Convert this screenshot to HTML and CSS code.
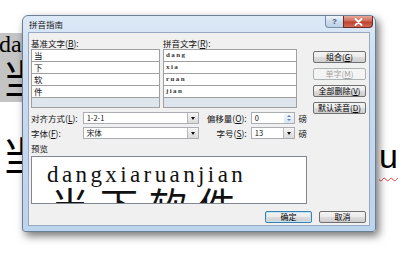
FILE: index.html
```html
<!DOCTYPE html>
<html>
<head>
  <title>拼音指南</title>
  <link rel="stylesheet" href="styles.css">
</head>
<body>
  <!-- document behind the dialog -->
  <div class="doc">
    <div class="sel">
      <div class="docPy">dang</div>
      <div class="docHan">当下软件</div>
    </div>
    <div class="docLine">
      <span class="docHan">当下软件</span>
      <span class="docLatin">u</span>
    </div>
  </div>

  <div class="window">
    <div class="titlebar">
      <span class="title">拼音指南</span>
      <div class="captionBtns">
        <span class="helpBtn">?</span>
        <span class="closeBtn">
          <svg width="9" height="8" viewBox="0 0 9 8"><path d="M1.5 1 L7.5 7 M7.5 1 L1.5 7" stroke="#fff" stroke-width="1.8" stroke-linecap="round"/></svg>
        </span>
      </div>
    </div>

    <div class="client">
      <div class="top">
        <div class="main">
          <div class="heads">
            <span class="headLeft">基准文字(<u>B</u>):</span>
            <span>拼音文字(<u>R</u>):</span>
          </div>
          <div class="table">
            <div class="col colBase">
              <div class="cell">当</div>
              <div class="cell">下</div>
              <div class="cell">软</div>
              <div class="cell">件</div>
              <div class="cell empty"></div>
            </div>
            <div class="col colPinyin">
              <div class="cell py">dang</div>
              <div class="cell py">xia</div>
              <div class="cell py">ruan</div>
              <div class="cell py">jian</div>
              <div class="cell empty"></div>
            </div>
          </div>

          <div class="optRow">
            <span class="optLabel">对齐方式(<u>L</u>):</span>
            <div class="combo wide"><span class="comboText">1-2-1</span><span class="dropBtn"></span></div>
            <span class="optLabel2">偏移量(<u>O</u>):</span>
            <div class="combo narrow"><span class="comboText">0</span><span class="spinBtn"><i class="up"></i><i class="down"></i></span></div>
            <span class="unit">磅</span>
          </div>
          <div class="optRow">
            <span class="optLabel">字体(<u>F</u>):</span>
            <div class="combo wide"><span class="comboText">宋体</span><span class="dropBtn"></span></div>
            <span class="optLabel2">字号(<u>S</u>):</span>
            <div class="combo narrow"><span class="comboText">13</span><span class="dropBtn"></span></div>
            <span class="unit">磅</span>
          </div>

          <div class="previewLabel">预览</div>
          <div class="preview">
            <div class="previewPy">dangxiaruanjian</div>
            <div class="previewHan">当下软件</div>
          </div>
        </div>

        <div class="side">
          <button class="btn">组合(<u>G</u>)</button>
          <button class="btn disabled">单字(<u>M</u>)</button>
          <button class="btn">全部删除(<u>V</u>)</button>
          <button class="btn">默认读音(<u>D</u>)</button>
        </div>
      </div>

      <div class="footer">
        <button class="btn default">确定</button>
        <button class="btn">取消</button>
      </div>
    </div>
  </div>
</body>
</html>
```

FILE: styles.css
```css
body {
  margin: 0;
  width: 400px;
  height: 266px;
  overflow: hidden;
  position: relative;
  background-color: #fff;
  font-family: "Noto Sans CJK SC", sans-serif;
}

u {
  text-underline-offset: 1px;
}

/* document */
.doc {
  padding-top: 33px;
}

.sel {
  background-color: #c4c4c4;
  width: 200px;
  height: 69px;
  overflow: hidden;
}

.docPy {
  font: 24px/22px "Liberation Serif", serif;
  margin-left: -1px;
}

.docHan {
  font: 40px/44px "Noto Sans CJK SC", sans-serif;
  margin-left: 2px;
  white-space: nowrap;
}

.docLine {
  display: flex;
  justify-content: space-between;
  align-items: flex-end;
  margin-top: 30px;
}

.docLatin {
  font: 34px/40px "Liberation Sans", sans-serif;
  padding-right: 2px;
  text-decoration: underline wavy #e04040;
  text-decoration-thickness: 1px;
  text-underline-offset: 9px;
}

/* dialog */
.window {
  position: absolute;
  left: 22px;
  top: 15px;
  width: 354px;
  height: 217px;
  box-sizing: border-box;
  border: 1px solid #6d7f95;
  border-radius: 6px 6px 3px 3px;
  padding: 0 5px 5px;
  background: linear-gradient(#dce9f7, #c8dbf0 30%, #bdd4ed);
  box-shadow: 3px 4px 8px rgba(0, 0, 0, 0.55);
  display: flex;
  flex-direction: column;
}

.titlebar {
  height: 16px;
  display: flex;
  justify-content: space-between;
  align-items: flex-start;
}

.title {
  font-size: 8.5px;
  line-height: 16px;
  padding-left: 1px;
  color: #1a1a1a;
}

.captionBtns {
  display: flex;
  margin-right: -3px;
}

.helpBtn {
  width: 18px;
  height: 12px;
  box-sizing: border-box;
  border: 1px solid #7b8da4;
  border-top: none;
  border-right: none;
  border-radius: 0 0 0 4px;
  background: linear-gradient(#eef4fb, #cddcee 50%, #bcd0e8);
  font: bold 8px/11px "Liberation Sans", sans-serif;
  color: #3d4f66;
  text-align: center;
}

.closeBtn {
  width: 30px;
  height: 12px;
  box-sizing: border-box;
  border: 1px solid #6b2c22;
  border-top: none;
  border-radius: 0 0 4px 0;
  background: linear-gradient(#e8a898, #d0685a 45%, #c0402e 55%, #d06a55);
  display: flex;
  align-items: center;
  justify-content: center;
}

.client {
  flex: 1;
  box-sizing: border-box;
  background-color: #f0f0f0;
  border: 1px solid #95a9c2;
  padding: 4px 3px 0 2px;
  font-size: 8.5px;
  color: #111;
}

.top {
  display: flex;
  gap: 6px;
}

.main {
  width: 276px;
}

.heads {
  display: flex;
  height: 12px;
  line-height: 12px;
}

.headLeft {
  width: 132px;
}

.table {
  display: flex;
  gap: 3px;
}

.col {
  border: 1px solid #a0a0a0;
  background-color: #fff;
}

.colBase {
  width: 127px;
}

.colPinyin {
  width: 132px;
}

.cell {
  height: 11px;
  line-height: 11px;
  border-bottom: 1px solid #a0a0a0;
  padding-left: 2px;
  overflow: hidden;
}

.cell.py {
  font: bold 7px/11px "Liberation Serif", serif;
  letter-spacing: 1.4px;
  color: #333;
}

.cell.empty {
  height: 9px;
  border-bottom: none;
  background-color: #dfe5ec;
}

.optRow {
  display: flex;
  align-items: center;
  height: 12px;
  margin-top: 4px;
}

.optRow + .optRow {
  margin-top: 3px;
}

.optLabel {
  width: 52px;
}

.optLabel2 {
  width: 48px;
  padding-right: 4px;
  text-align: right;
}

.combo {
  height: 12px;
  box-sizing: border-box;
  border: 1px solid #abadb3;
  background-color: #fff;
  display: flex;
  justify-content: space-between;
}

.combo.wide {
  width: 117px;
}

.combo.narrow {
  width: 45px;
}

.comboText {
  padding-left: 3px;
  line-height: 10px;
  font-size: 7.5px;
}

.dropBtn {
  width: 10px;
  background: linear-gradient(#f6f6f6, #dadada);
  border-left: 1px solid #b8b8b8;
  display: flex;
  align-items: center;
  justify-content: center;
}

.dropBtn::after {
  content: "";
  border-left: 2.5px solid transparent;
  border-right: 2.5px solid transparent;
  border-top: 3px solid #111;
}

.spinBtn {
  width: 10px;
  display: flex;
  flex-direction: column;
  align-items: center;
  justify-content: space-evenly;
  background: linear-gradient(#f4f8fc, #dce6f0);
}

.spinBtn i {
  border-left: 2.5px solid transparent;
  border-right: 2.5px solid transparent;
}

.spinBtn .up {
  border-bottom: 2.5px solid #5a86b5;
}

.spinBtn .down {
  border-top: 2.5px solid #5a86b5;
}

.unit {
  margin-left: 3px;
}

.previewLabel {
  height: 12px;
  line-height: 12px;
  margin-top: 3px;
}

.preview {
  height: 48px;
  box-sizing: border-box;
  margin-top: 2px;
  border: 1px solid #828790;
  background-color: #fff;
  overflow: hidden;
  padding-left: 15px;
}

.previewPy {
  font: 23px/22px "Liberation Serif", serif;
  letter-spacing: 3.4px;
  margin-top: 7px;
}

.previewHan {
  font: 38px/38px "Noto Sans CJK SC", sans-serif;
  letter-spacing: 11px;
  margin-top: -1px;
  padding-left: 4px;
  white-space: nowrap;
}

.side {
  width: 53px;
  display: flex;
  flex-direction: column;
  gap: 5px;
  padding-top: 14px;
}

.btn {
  height: 12px;
  width: 53px;
  box-sizing: border-box;
  padding: 0;
  border: 1px solid #707070;
  border-radius: 2px;
  background: linear-gradient(#f3f3f3, #ebebeb 50%, #dcdcdc 51%, #cfcfcf);
  font-family: "Noto Sans CJK SC", sans-serif;
  font-size: 8px;
  line-height: 10px;
  color: #000;
}

.btn.disabled {
  color: #a3a3a3;
  border-color: #adb2b5;
  background: #f4f4f4;
}

.btn.default {
  border-color: #3c7fb1;
  box-shadow: inset 0 0 0 1px #bfe3f8;
}

.footer {
  display: flex;
  justify-content: flex-end;
  gap: 7px;
  margin-top: 7px;
}

.footer .btn {
  width: 47px;
}
```
